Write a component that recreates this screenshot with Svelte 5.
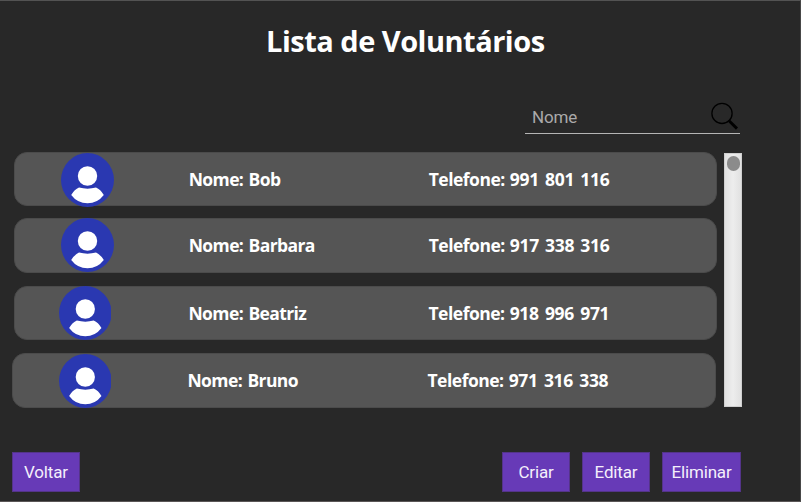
<script>
  const volunteers = [
    { name: 'Bob', phone: '991 801 116', kind: 'first' },
    { name: 'Barbara', phone: '917 338 316', kind: 'second' },
    { name: 'Beatriz', phone: '918 996 971', kind: 'third' },
    { name: 'Bruno', phone: '971 316 338', kind: 'fourth' }
  ];
</script>

<main class="window">
  <h1>Lista de Voluntários</h1>

  <div class="search">
    <input type="text" placeholder="Nome" aria-label="Nome" />
    <svg class="lens" width="30" height="30" viewBox="0 0 30 30" aria-hidden="true">
      <circle cx="12" cy="12.4" r="10.1" fill="none" stroke="#000" stroke-width="1.3" />
      <path d="M18.6 19.2 L19.8 20.4" stroke="#000" stroke-width="1.5" />
      <path d="M19.3 20 L27 27.6" stroke="#000" stroke-width="2.9" />
    </svg>
  </div>

  <div class="body">
    <ul class="list">
      {#each volunteers as v}
        <li class="card {v.kind}">
          <svg class="avatar" viewBox="0 0 53 54" preserveAspectRatio="none" aria-hidden="true">
            <ellipse cx="26.5" cy="27" rx="26.5" ry="27" fill="#2a38b1" />
            <ellipse cx="26.5" cy="23" rx="9.7" ry="9.8" fill="#fff" />
            <path d="M18 34.6 Q26.5 36.8 35 34.6 Q39.5 36.6 42.8 42 Q36.5 50.3 26.5 50.3 Q16.5 50.3 10.2 42 Q13.5 36.6 18 34.6 Z" fill="#fff" />
          </svg>
          <span class="name">Nome: {v.name}</span>
          <span class="phone">Telefone: <span class="number">{v.phone}</span></span>
        </li>
      {/each}
    </ul>
    <div class="scroll"><div class="thumb"></div></div>
  </div>

  <footer>
    <button class="back">Voltar</button>
    <button>Criar</button>
    <button>Editar</button>
    <button class="wide">Eliminar</button>
  </footer>
</main>

<style>
  :global(body) {
    background: #282828;
  }
  .window {
    box-sizing: border-box;
    width: 801px;
    height: 502px;
    display: flex;
    flex-direction: column;
    overflow: hidden;
    background: #282828;
    border-top: 1px solid #535353;
    border-right: 1px solid #484848;
    border-bottom: 1px solid #5a5656;
  }
  h1 {
    margin: 20px 0 0 266px;
    height: 40px;
    font: 700 29px/40px 'Open Sans', sans-serif;
    color: #fff;
    white-space: nowrap;
    letter-spacing: -0.5px;
  }
  .search {
    box-sizing: border-box;
    display: flex;
    margin: 39px 0 0 525px;
    width: 215px;
    height: 34px;
    border-bottom: 1.5px solid #b5b5b5;
  }
  input {
    flex: 1;
    min-width: 0;
    height: 34px;
    box-sizing: border-box;
    border: 0;
    padding: 0 0 1px 7px;
    background: none;
    outline: none;
    font: 17px Roboto, sans-serif;
    letter-spacing: -0.2px;
    color: #aaa;
  }
  input::placeholder {
    color: #aaa;
    opacity: 1;
  }
  .lens {
    flex: none;
    margin-top: 1px;
  }
  .body {
    display: flex;
    height: 256px;
    margin: 18px 0 0 13px;
  }
  .list {
    width: 704px;
    margin: 0;
    padding: 0;
    list-style: none;
  }
  .card {
    box-sizing: border-box;
    display: flex;
    align-items: center;
    width: 703.4px;
    height: 54.4px;
    margin-left: 0.5px;
    background: #555;
    border: 1px solid #4b4b4b;
    border-radius: 13px;
    font: 700 17.5px/24px 'Open Sans', sans-serif;
    color: #fff;
    white-space: nowrap;
  }
  .second {
    margin-top: 12px;
    line-height: 23px;
    padding-bottom: 1px;
  }
  .third {
    margin-top: 13px;
  }
  .fourth {
    margin: 13px 0 0 -0.8px;
  }
  .avatar {
    flex: none;
    width: 53px;
    height: 54px;
    margin: 1.5px 0 0 46.5px;
  }
  .second .avatar {
    margin-top: 0;
  }
  .third .avatar {
    width: 52.6px;
    margin: 0 0 0 44px;
  }
  .fourth .avatar {
    width: 52.6px;
    margin: 1.5px 0 0 45.5px;
  }
  .name {
    width: 240px;
    margin-left: 74.7px;
    letter-spacing: -0.6px;
    word-spacing: 1.4px;
  }
  .third .name {
    margin-left: 77.4px;
  }
  .fourth .name {
    margin-left: 76.2px;
  }
  .phone {
    letter-spacing: -0.5px;
    word-spacing: 1px;
  }
  .number {
    letter-spacing: -0.3px;
    word-spacing: 1.9px;
  }
  .scroll {
    box-sizing: border-box;
    width: 18px;
    height: 254px;
    margin: 1px 0 0 7px;
    padding: 2px 1.5px;
    border: 1px solid #cfcfcf;
    background: linear-gradient(90deg, #e1e1e1, #ededed 50%, #e1e1e1);
  }
  .thumb {
    width: 13px;
    height: 15px;
    border-radius: 7px;
    background: #8b8b8b;
  }
  footer {
    display: flex;
    gap: 12px;
    margin: 44px 0 0 12px;
  }
  button {
    box-sizing: border-box;
    width: 68px;
    height: 40px;
    padding: 0;
    border: 1px solid #543489;
    background: #673ab7;
    color: #f4effb;
    font: 17px Roboto, sans-serif;
    letter-spacing: -0.15px;
  }
  .back {
    margin-right: 410px;
  }
  .wide {
    width: 79px;
  }
</style>
